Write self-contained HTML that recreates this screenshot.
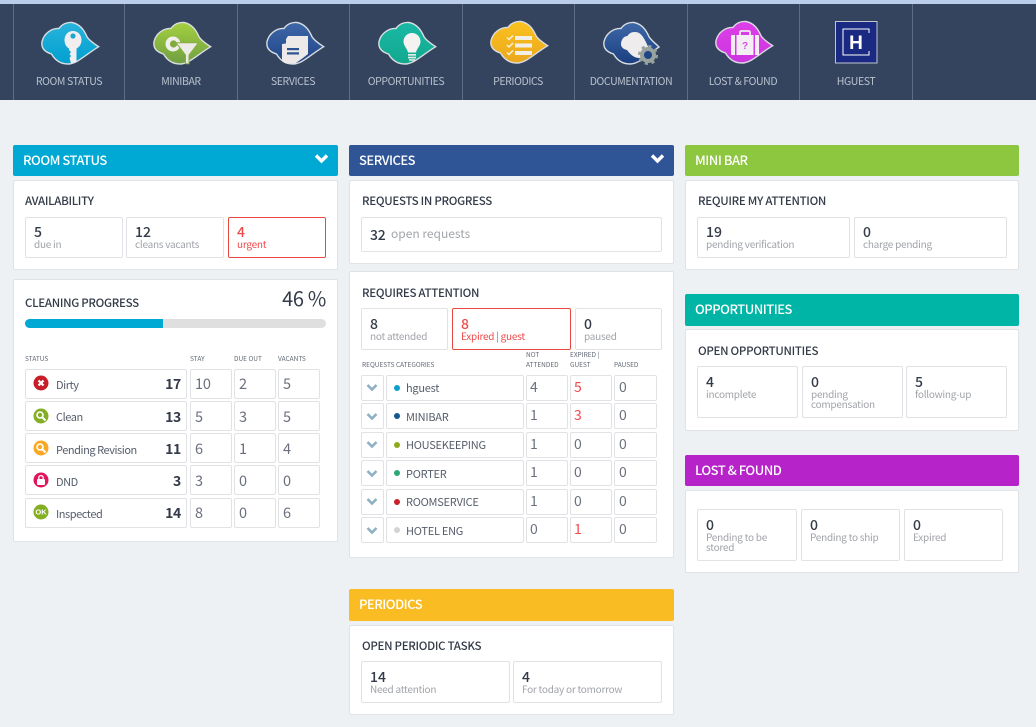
<!DOCTYPE html>
<html><head><meta charset="utf-8"><title>Dashboard</title>
<style>
*{box-sizing:border-box}
html,body{margin:0;padding:0;width:1036px;height:727px;overflow:hidden;background:#eef1f4}
body{position:relative;font-family:"Noto Sans CJK JP","Liberation Sans",sans-serif;color:#333b48}
.a,.b,.t,.hd,svg,.sep{position:absolute}
.t{white-space:nowrap;line-height:20px;height:20px}
.b{background:#fff;border:1px solid #e0e2e5;border-radius:2px}
.c{background:#fff;border:1px solid #e0e2e5;border-radius:2px;position:absolute}
.r{border-color:#e8483f}
.hd{border-radius:2px;color:#fff;font-size:13px;font-weight:500;letter-spacing:-.5px;line-height:30px;padding-left:10px}
.nl{color:#b9c1cd;font-size:10.5px;letter-spacing:-.4px;text-align:center;width:112px;top:72px}
.sep{top:4px;width:1px;height:96px;background:#5f6c83}
.ti{font-size:11.5px;font-weight:500;color:#333b48;letter-spacing:-.3px}
.n{font-size:14px;font-weight:500;color:#333b48}
.l{font-size:10px;letter-spacing:-.25px;color:#a0a3a9;margin-top:1px}
.th{font-size:6.5px;color:#5f6672}
.s{font-size:11px;letter-spacing:-.45px;color:#565d6b}
.s2{letter-spacing:-.25px}
.m{font-size:14.5px;letter-spacing:-.2px;color:#6a707d}
.bd{font-size:14px;font-weight:700;letter-spacing:-.3px;color:#333b48;text-align:right;width:30px}
.t.red{color:#ee4a4a}
</style></head><body>

<div class="a" style="left:0;top:0;width:1036px;height:4px;background:#bacdea"></div>
<div class="a" style="left:0;top:4px;width:1036px;height:96px;background:#34445f"></div>
<div class="sep" style="left:13px"></div><div class="sep" style="left:124px"></div><div class="sep" style="left:237px"></div><div class="sep" style="left:349px"></div><div class="sep" style="left:462px"></div><div class="sep" style="left:574px"></div><div class="sep" style="left:687px"></div><div class="sep" style="left:799px"></div><div class="sep" style="left:912px"></div>

<!-- room status icon -->
<svg style="left:41px;top:21px" width="60" height="46" viewBox="0 0 60 46"><defs><linearGradient id="g1" x1="0" y1="0" x2="0" y2="1"><stop offset="0" stop-color="#29b4dc"/><stop offset="1" stop-color="#009fcf"/></linearGradient></defs>
<path d="M57.7 25.7C52 22 48 19 46 15.7C43 9 39 3 31 1.5C26 1 21 3 18 7.5C11 7 3 12 1 20.7C0 27 4 31 10.5 33C14 39 19 43 27 43C36 43 44 34 57.7 25.7Z" fill="url(#g1)" stroke="#d9dde0" stroke-width="1.4"/>
<path d="M32 10C27 10 23.500 14 23.500 19C23.500 23 25.500 26 28 27.500L28 29L30 31L28.500 33L30 35L28.500 37L30 42.500L35.500 41L35.500 27.500C38.500 26 40.500 23 40.500 19C40.500 14 37 10 32 10Z" fill="#f0eeee"/><circle cx="32" cy="15" r="2.600" fill="#1aa9d3"/></svg>

<!-- minibar icon -->
<svg style="left:153px;top:21px" width="60" height="46" viewBox="0 0 60 46"><defs><linearGradient id="g2" x1="0" y1="0" x2="0" y2="1"><stop offset="0" stop-color="#a5d03f"/><stop offset="1" stop-color="#6f9f42"/></linearGradient></defs>
<path d="M57.700 25.700C52 22 48 19 46 15.700C43 9 39 3 31 1.500C26 1 21 3 18 7.500C11 7 3 12 1 20.700C0 27 4 31 10.500 33C14 39 19 43 27 43C36 43 44 34 57.700 25.700Z" fill="url(#g2)" stroke="#d9dde0" stroke-width="1.400"/>
<circle cx="20" cy="23" r="7.500" fill="#f0efec"/><circle cx="20.500" cy="23" r="3.600" fill="#82ac40"/>
<path d="M23 21.700H45.500L36 34V42.800H32.500V34Z" fill="#eeeae8" stroke="#84ae40" stroke-width="1"/></svg>

<!-- services icon -->
<svg style="left:266px;top:21px" width="60" height="46" viewBox="0 0 60 46"><defs><linearGradient id="g3" x1="0" y1="0" x2="0" y2="1"><stop offset="0" stop-color="#3f68a8"/><stop offset="1" stop-color="#1f4488"/></linearGradient></defs>
<path d="M57.700 25.700C52 22 48 19 46 15.700C43 9 39 3 31 1.500C26 1 21 3 18 7.500C11 7 3 12 1 20.700C0 27 4 31 10.500 33C14 39 19 43 27 43C36 43 44 34 57.700 25.700Z" fill="url(#g3)" stroke="#d9dde0" stroke-width="1.400"/>
<path d="M22 15H42V33C37 37 33 40 29 42.500H21C18 42 16.500 41 16 39V23L20 22.500V18Z" fill="#ece9e8"/><rect x="21" y="27" width="12" height="2.200" fill="#2d528f"/><rect x="21" y="31.300" width="12" height="2.200" fill="#2d528f"/></svg>

<!-- opportunities icon -->
<svg style="left:378px;top:21px" width="60" height="46" viewBox="0 0 60 46"><defs><linearGradient id="g4" x1="0" y1="0" x2="0" y2="1"><stop offset="0" stop-color="#19b9a5"/><stop offset="1" stop-color="#12a88e"/></linearGradient></defs>
<path d="M57.700 25.700C52 22 48 19 46 15.700C43 9 39 3 31 1.500C26 1 21 3 18 7.500C11 7 3 12 1 20.700C0 27 4 31 10.500 33C14 39 19 43 27 43C36 43 44 34 57.700 25.700Z" fill="url(#g4)" stroke="#d9dde0" stroke-width="1.400"/>
<path d="M34 12C29 12 25.500 16 25.500 20.500C25.500 25 29 27 30 31.500H38C39 27 42.500 25 42.500 20.500C42.500 16 39 12 34 12Z" fill="#f4f3f1"/><rect x="30" y="33" width="8" height="1.700" fill="#e8e8e6"/><rect x="30" y="35.700" width="8" height="1.700" fill="#e8e8e6"/><rect x="31" y="38.200" width="6" height="1.500" fill="#e8e8e6"/></svg>

<!-- periodics icon -->
<svg style="left:490px;top:20px" width="60" height="46" viewBox="0 0 60 46"><defs><linearGradient id="g5" x1="0" y1="0" x2="0" y2="1"><stop offset="0" stop-color="#fbc21f"/><stop offset="1" stop-color="#eaa81e"/></linearGradient></defs>
<path d="M57.700 25.700C52 22 48 19 46 15.700C43 9 39 3 31 1.500C26 1 21 3 18 7.500C11 7 3 12 1 20.700C0 27 4 31 10.500 33C14 39 19 43 27 43C36 43 44 34 57.700 25.700Z" fill="url(#g5)" stroke="#d9dde0" stroke-width="1.400"/>
<path d="M17 17.500L19 19.500L23 15.500M17 25L19 27L23 23M17 32.500L19 34.500L23 30.500" fill="none" stroke="#f5f1e6" stroke-width="1.500"/><rect x="25" y="16" width="17" height="4" fill="#f2efe9"/><rect x="25" y="23.500" width="17" height="4" fill="#f2efe9"/><rect x="25" y="31" width="17" height="4" fill="#f2efe9"/></svg>

<!-- documentation icon -->
<svg style="left:603px;top:21px" width="62" height="46" viewBox="0 0 62 46"><defs><linearGradient id="g6" x1="0" y1="0" x2="0" y2="1"><stop offset="0" stop-color="#3f68a8"/><stop offset="1" stop-color="#1a3f80"/></linearGradient></defs>
<path d="M56 26C52 22 48 19 46 15.700C43 9 39 3 31 1.500C26 1 21 3 18 7.500C11 7 3 12 1 20.700C0 27 4 31 10.500 33C14 39 19 43 27 43C36 43 44 34 56 26Z" fill="url(#g6)" stroke="#d9dde0" stroke-width="1.400"/>
<path d="M48 32C44 24 41 14 35 11.500C30 10 26 12 24.500 15C20 15 18 20 18 23C18 26 20 28 24 29C27 33 31 37 36 37C41 37 44 35 48 32Z" fill="#efeced"/>
<circle cx="45" cy="34" r="6" fill="#1f4488" stroke="#98a39d" stroke-width="4"/><circle cx="45" cy="34" r="8.800" fill="none" stroke="#98a39d" stroke-width="2.400" stroke-dasharray="3.200 3.710"/></svg>

<!-- lost found icon -->
<svg style="left:715px;top:20px" width="60" height="46" viewBox="0 0 60 46"><defs><linearGradient id="g7" x1="0" y1="0" x2="0" y2="1"><stop offset="0" stop-color="#dd3fe8"/><stop offset="1" stop-color="#cc35e0"/></linearGradient></defs>
<path d="M57.700 25.700C52 22 48 19 46 15.700C43 9 39 3 31 1.500C26 1 21 3 18 7.500C11 7 3 12 1 20.700C0 27 4 31 10.500 33C14 39 19 43 27 43C36 43 44 34 57.700 25.700Z" fill="url(#g7)" stroke="#d9dde0" stroke-width="1.400"/>
<path d="M25 15V12.500C25 11.500 25.500 11 26.500 11H33.500C34.500 11 35 11.500 35 12.500V15" fill="none" stroke="#f2e9f2" stroke-width="1.800"/><path d="M17 15H20V35H17C16.500 35 16 34.500 16 34V16C16 15.500 16.500 15 17 15ZM21.500 15H38.500V35H21.500ZM40 15H43C43.500 15 44 15.500 44 16V34C44 34.500 43.500 35 43 35H40Z" fill="#f3eef3"/><text x="30" y="29" font-family="Liberation Sans,sans-serif" font-size="10" font-weight="700" fill="#d94fe6" text-anchor="middle">?</text></svg>

<!-- hguest icon -->
<svg style="left:835px;top:21px" width="43" height="43" viewBox="0 0 43 43"><rect x=".5" y=".5" width="41.500" height="41.500" fill="#1a2a82" stroke="#c0c6d0"/><path d="M34 12V8H8V34H34V30" fill="none" stroke="#fff" stroke-width="1"/><text x="21" y="28" font-family="Liberation Sans,sans-serif" font-size="19" font-weight="700" fill="#fff" text-anchor="middle">H</text></svg>

<div class="t nl" style="left:13px">ROOM STATUS</div>
<div class="t nl" style="left:125px">MINIBAR</div>
<div class="t nl" style="left:237px">SERVICES</div>
<div class="t nl" style="left:350px">OPPORTUNITIES</div>
<div class="t nl" style="left:462px">PERIODICS</div>
<div class="t nl" style="left:575px">DOCUMENTATION</div>
<div class="t nl" style="left:687px">LOST &amp; FOUND</div>
<div class="t nl" style="left:800px">HGUEST</div>

<!-- COLUMN 1 -->
<div class="hd" style="left:13px;top:145px;width:325px;height:31px;background:#00a9d4">ROOM STATUS</div>
<svg style="left:314px;top:153px" width="15" height="11" viewBox="0 0 15 11"><path d="M2 2.500L7.500 8L13 2.500" fill="none" stroke="#fff" stroke-width="3.400"/></svg>
<div class="c" style="left:13px;top:180px;width:325px;height:90px"></div>
<div class="t ti" style="left:25px;top:191px">AVAILABILITY</div>
<div class="b" style="left:25px;top:217px;width:98px;height:41px"></div>
<div class="b" style="left:126px;top:217px;width:98px;height:41px"></div>
<div class="b r" style="left:228px;top:217px;width:98px;height:41px"></div>
<div class="t n" style="left:34px;top:222px">5</div><div class="t l" style="left:34px;top:233px">due in</div>
<div class="t n" style="left:135px;top:222px">12</div><div class="t l" style="left:135px;top:233px">cleans vacants</div>
<div class="t n red" style="left:237px;top:222px">4</div><div class="t l red" style="left:237px;top:233px">urgent</div>

<div class="c" style="left:13px;top:279px;width:325px;height:263px"></div>
<div class="t ti" style="left:25px;top:293px">CLEANING PROGRESS</div>
<div class="t" style="right:710px;top:288px;font-size:20px;letter-spacing:-.3px;color:#333b48">46 %</div>
<div class="a" style="left:25px;top:319px;width:301px;height:9px;border-radius:5px;background:#dfdfdf;overflow:hidden"><div style="width:138px;height:9px;background:#00a9d4"></div></div>
<div class="t th" style="left:25px;top:348px">STATUS</div><div class="t th" style="left:190px;top:348px">STAY</div><div class="t th" style="left:234px;top:348px">DUE OUT</div><div class="t th" style="left:278px;top:348px">VACANTS</div>

<div class="b" style="left:25px;top:369px;width:162px;height:30px"></div><div class="b" style="left:190px;top:369px;width:42px;height:30px"></div><div class="b" style="left:234px;top:369px;width:42px;height:30px"></div><div class="b" style="left:278px;top:369px;width:42px;height:30px"></div>
<div class="b" style="left:25px;top:401px;width:162px;height:30px"></div><div class="b" style="left:190px;top:401px;width:42px;height:30px"></div><div class="b" style="left:234px;top:401px;width:42px;height:30px"></div><div class="b" style="left:278px;top:401px;width:42px;height:30px"></div>
<div class="b" style="left:25px;top:433px;width:162px;height:30px"></div><div class="b" style="left:190px;top:433px;width:42px;height:30px"></div><div class="b" style="left:234px;top:433px;width:42px;height:30px"></div><div class="b" style="left:278px;top:433px;width:42px;height:30px"></div>
<div class="b" style="left:25px;top:465px;width:162px;height:30px"></div><div class="b" style="left:190px;top:465px;width:42px;height:30px"></div><div class="b" style="left:234px;top:465px;width:42px;height:30px"></div><div class="b" style="left:278px;top:465px;width:42px;height:30px"></div>
<div class="b" style="left:25px;top:498px;width:162px;height:30px"></div><div class="b" style="left:190px;top:498px;width:42px;height:30px"></div><div class="b" style="left:234px;top:498px;width:42px;height:30px"></div><div class="b" style="left:278px;top:498px;width:42px;height:30px"></div>

<svg style="left:33px;top:375px" width="16" height="16" viewBox="0 0 16 16"><circle cx="8" cy="8" r="7.500" fill="#c61f2a"/><path d="M5.500 5.500L10.500 10.500M10.500 5.500L5.500 10.500" stroke="#fff" stroke-width="2.200"/></svg>
<svg style="left:33px;top:408px" width="16" height="16" viewBox="0 0 16 16"><circle cx="8" cy="8" r="7.500" fill="#84ae24"/><circle cx="7" cy="7" r="3" fill="none" stroke="#fff" stroke-width="1.600"/><path d="M9.500 9.500L12.500 12.500" stroke="#fff" stroke-width="2"/></svg>
<svg style="left:33px;top:440px" width="16" height="16" viewBox="0 0 16 16"><circle cx="8" cy="8" r="7.500" fill="#f9a825"/><circle cx="7" cy="7" r="3" fill="none" stroke="#fff" stroke-width="1.600"/><path d="M9.500 9.500L12.500 12.500" stroke="#fff" stroke-width="2"/></svg>
<svg style="left:33px;top:472px" width="16" height="16" viewBox="0 0 16 16"><circle cx="8" cy="8" r="7.500" fill="#e2145c"/><rect x="4" y="7" width="8" height="6" rx="1" fill="#fff"/><path d="M5.800 7.500V5.500C5.800 3 10.200 3 10.200 5.500V7.500" fill="none" stroke="#fff" stroke-width="1.300"/></svg>
<svg style="left:33px;top:504px" width="16" height="16" viewBox="0 0 16 16"><circle cx="8" cy="8" r="7.500" fill="#84ae24"/><text x="8" y="10.500" font-family="Liberation Sans,sans-serif" font-size="7.500" font-weight="700" fill="#fff" text-anchor="middle">OK</text></svg>

<div class="t s" style="left:56px;top:375px">Dirty</div><div class="t bd" style="left:151px;top:374px">17</div><div class="t m" style="left:195px;top:374px">10</div><div class="t m" style="left:239px;top:374px">2</div><div class="t m" style="left:283px;top:374px">5</div>
<div class="t s" style="left:56px;top:407px">Clean</div><div class="t bd" style="left:151px;top:407px">13</div><div class="t m" style="left:195px;top:407px">5</div><div class="t m" style="left:239px;top:407px">3</div><div class="t m" style="left:283px;top:407px">5</div>
<div class="t s" style="left:56px;top:440px">Pending Revision</div><div class="t bd" style="left:151px;top:439px">11</div><div class="t m" style="left:195px;top:439px">6</div><div class="t m" style="left:239px;top:439px">1</div><div class="t m" style="left:283px;top:439px">4</div>
<div class="t s" style="left:56px;top:472px">DND</div><div class="t bd" style="left:151px;top:471px">3</div><div class="t m" style="left:195px;top:471px">3</div><div class="t m" style="left:239px;top:471px">0</div><div class="t m" style="left:283px;top:471px">0</div>
<div class="t s" style="left:56px;top:504px">Inspected</div><div class="t bd" style="left:151px;top:503px">14</div><div class="t m" style="left:195px;top:503px">8</div><div class="t m" style="left:239px;top:503px">0</div><div class="t m" style="left:283px;top:503px">6</div>

<!-- COLUMN 2 -->
<div class="hd" style="left:349px;top:145px;width:325px;height:31px;background:#2f5597">SERVICES</div>
<svg style="left:650px;top:153px" width="15" height="11" viewBox="0 0 15 11"><path d="M2 2.500L7.500 8L13 2.500" fill="none" stroke="#fff" stroke-width="3.400"/></svg>
<div class="c" style="left:349px;top:180px;width:325px;height:84px"></div>
<div class="t ti" style="left:362px;top:191px">REQUESTS IN PROGRESS</div>
<div class="b" style="left:361px;top:217px;width:301px;height:35px"></div>
<div class="t n" style="left:370px;top:225px;letter-spacing:-.2px">32</div>
<div class="t" style="left:391px;top:224px;font-size:12px;color:#a2a5aa">open requests</div>

<div class="c" style="left:349px;top:271px;width:325px;height:287px"></div>
<div class="t ti" style="left:362px;top:283px">REQUIRES ATTENTION</div>
<div class="b" style="left:361px;top:308px;width:87px;height:42px"></div>
<div class="b r" style="left:452px;top:308px;width:119px;height:42px"></div>
<div class="b" style="left:575px;top:308px;width:87px;height:42px"></div>
<div class="t n" style="left:370px;top:314px">8</div><div class="t l" style="left:370px;top:325px">not attended</div>
<div class="t n red" style="left:461px;top:314px">8</div><div class="t l red" style="left:461px;top:325px">Expired | guest</div>
<div class="t n" style="left:584px;top:314px">0</div><div class="t l" style="left:584px;top:325px">paused</div>
<div class="t th" style="left:362px;top:354px">REQUESTS CATEGORIES</div>
<div class="t th" style="left:526px;top:344px">NOT</div><div class="t th" style="left:526px;top:354px">ATTENDED</div>
<div class="t th" style="left:570px;top:344px">EXPIRED |</div><div class="t th" style="left:570px;top:354px">GUEST</div>
<div class="t th" style="left:614px;top:354px">PAUSED</div>

<div class="b" style="left:361px;top:375px;width:23px;height:26px"></div><div class="b" style="left:386px;top:375px;width:138px;height:26px"></div><div class="b" style="left:526px;top:375px;width:42px;height:26px"></div><div class="b" style="left:570px;top:375px;width:42px;height:26px"></div><div class="b" style="left:614px;top:375px;width:43px;height:26px"></div>
<div class="b" style="left:361px;top:403px;width:23px;height:26px"></div><div class="b" style="left:386px;top:403px;width:138px;height:26px"></div><div class="b" style="left:526px;top:403px;width:42px;height:26px"></div><div class="b" style="left:570px;top:403px;width:42px;height:26px"></div><div class="b" style="left:614px;top:403px;width:43px;height:26px"></div>
<div class="b" style="left:361px;top:432px;width:23px;height:26px"></div><div class="b" style="left:386px;top:432px;width:138px;height:26px"></div><div class="b" style="left:526px;top:432px;width:42px;height:26px"></div><div class="b" style="left:570px;top:432px;width:42px;height:26px"></div><div class="b" style="left:614px;top:432px;width:43px;height:26px"></div>
<div class="b" style="left:361px;top:460px;width:23px;height:26px"></div><div class="b" style="left:386px;top:460px;width:138px;height:26px"></div><div class="b" style="left:526px;top:460px;width:42px;height:26px"></div><div class="b" style="left:570px;top:460px;width:42px;height:26px"></div><div class="b" style="left:614px;top:460px;width:43px;height:26px"></div>
<div class="b" style="left:361px;top:489px;width:23px;height:26px"></div><div class="b" style="left:386px;top:489px;width:138px;height:26px"></div><div class="b" style="left:526px;top:489px;width:42px;height:26px"></div><div class="b" style="left:570px;top:489px;width:42px;height:26px"></div><div class="b" style="left:614px;top:489px;width:43px;height:26px"></div>
<div class="b" style="left:361px;top:517px;width:23px;height:26px"></div><div class="b" style="left:386px;top:517px;width:138px;height:26px"></div><div class="b" style="left:526px;top:517px;width:42px;height:26px"></div><div class="b" style="left:570px;top:517px;width:42px;height:26px"></div><div class="b" style="left:614px;top:517px;width:43px;height:26px"></div>

<svg style="left:366px;top:383px" width="12" height="9" viewBox="0 0 12 9"><path d="M1.500 2L6 6.500L10.500 2" fill="none" stroke="#8fb0c4" stroke-width="2.600"/></svg>
<svg style="left:366px;top:412px" width="12" height="9" viewBox="0 0 12 9"><path d="M1.500 2L6 6.500L10.500 2" fill="none" stroke="#8fb0c4" stroke-width="2.600"/></svg>
<svg style="left:366px;top:440px" width="12" height="9" viewBox="0 0 12 9"><path d="M1.500 2L6 6.500L10.500 2" fill="none" stroke="#8fb0c4" stroke-width="2.600"/></svg>
<svg style="left:366px;top:469px" width="12" height="9" viewBox="0 0 12 9"><path d="M1.500 2L6 6.500L10.500 2" fill="none" stroke="#8fb0c4" stroke-width="2.600"/></svg>
<svg style="left:366px;top:497px" width="12" height="9" viewBox="0 0 12 9"><path d="M1.500 2L6 6.500L10.500 2" fill="none" stroke="#8fb0c4" stroke-width="2.600"/></svg>
<svg style="left:366px;top:526px" width="12" height="9" viewBox="0 0 12 9"><path d="M1.500 2L6 6.500L10.500 2" fill="none" stroke="#8fb0c4" stroke-width="2.600"/></svg>

<div class="a" style="left:394px;top:385px;width:6px;height:6px;border-radius:50%;background:#0f9fcb"></div>
<div class="a" style="left:394px;top:413px;width:6px;height:6px;border-radius:50%;background:#14598f"></div>
<div class="a" style="left:394px;top:442px;width:6px;height:6px;border-radius:50%;background:#8cab1e"></div>
<div class="a" style="left:394px;top:470px;width:6px;height:6px;border-radius:50%;background:#2ba877"></div>
<div class="a" style="left:394px;top:499px;width:6px;height:6px;border-radius:50%;background:#c9202c"></div>
<div class="a" style="left:394px;top:527px;width:6px;height:6px;border-radius:50%;background:#d3d3d3"></div>

<div class="t s s2" style="left:406px;top:378px">hguest</div><div class="t m" style="left:530px;top:377px;font-size:14px">4</div><div class="t m red" style="left:574px;top:377px;font-size:14px">5</div><div class="t m" style="left:619px;top:377px;font-size:14px">0</div>
<div class="t s s2" style="left:406px;top:407px">MINIBAR</div><div class="t m" style="left:530px;top:405px;font-size:14px">1</div><div class="t m red" style="left:574px;top:405px;font-size:14px">3</div><div class="t m" style="left:619px;top:405px;font-size:14px">0</div>
<div class="t s s2" style="left:406px;top:435px">HOUSEKEEPING</div><div class="t m" style="left:530px;top:434px;font-size:14px">1</div><div class="t m" style="left:574px;top:434px;font-size:14px">0</div><div class="t m" style="left:619px;top:434px;font-size:14px">0</div>
<div class="t s s2" style="left:406px;top:464px">PORTER</div><div class="t m" style="left:530px;top:462px;font-size:14px">1</div><div class="t m" style="left:574px;top:462px;font-size:14px">0</div><div class="t m" style="left:619px;top:462px;font-size:14px">0</div>
<div class="t s s2" style="left:406px;top:492px">ROOMSERVICE</div><div class="t m" style="left:530px;top:491px;font-size:14px">1</div><div class="t m" style="left:574px;top:491px;font-size:14px">0</div><div class="t m" style="left:619px;top:491px;font-size:14px">0</div>
<div class="t s s2" style="left:406px;top:521px">HOTEL ENG</div><div class="t m" style="left:530px;top:519px;font-size:14px">0</div><div class="t m red" style="left:574px;top:519px;font-size:14px">1</div><div class="t m" style="left:619px;top:519px;font-size:14px">0</div>

<div class="hd" style="left:349px;top:589px;width:325px;height:32px;background:#f9bc22">PERIODICS</div>
<div class="c" style="left:349px;top:625px;width:325px;height:90px"></div>
<div class="t ti" style="left:362px;top:636px">OPEN PERIODIC TASKS</div>
<div class="b" style="left:361px;top:661px;width:149px;height:42px"></div>
<div class="b" style="left:513px;top:661px;width:149px;height:42px"></div>
<div class="t n" style="left:370px;top:667px">14</div><div class="t l" style="left:370px;top:678px">Need attention</div>
<div class="t n" style="left:522px;top:667px">4</div><div class="t l" style="left:522px;top:678px">For today or tomorrow</div>

<!-- COLUMN 3 -->
<div class="hd" style="left:685px;top:145px;width:334px;height:31px;background:#8dc63f">MINI BAR</div>
<div class="c" style="left:685px;top:180px;width:334px;height:90px"></div>
<div class="t ti" style="left:698px;top:191px">REQUIRE MY ATTENTION</div>
<div class="b" style="left:697px;top:217px;width:153px;height:41px"></div>
<div class="b" style="left:854px;top:217px;width:153px;height:41px"></div>
<div class="t n" style="left:706px;top:222px">19</div><div class="t l" style="left:706px;top:233px">pending verification</div>
<div class="t n" style="left:863px;top:222px">0</div><div class="t l" style="left:863px;top:233px">charge pending</div>

<div class="hd" style="left:685px;top:294px;width:334px;height:32px;background:#00b5a5">OPPORTUNITIES</div>
<div class="c" style="left:685px;top:329px;width:334px;height:102px"></div>
<div class="t ti" style="left:698px;top:341px">OPEN OPPORTUNITIES</div>
<div class="b" style="left:697px;top:366px;width:101px;height:52px"></div>
<div class="b" style="left:802px;top:366px;width:101px;height:52px"></div>
<div class="b" style="left:906px;top:366px;width:101px;height:52px"></div>
<div class="t n" style="left:706px;top:372px">4</div><div class="t l" style="left:706px;top:383px">incomplete</div>
<div class="t n" style="left:811px;top:372px">0</div><div class="t l" style="left:811px;top:383px">pending</div><div class="t l" style="left:811px;top:393px">compensation</div>
<div class="t n" style="left:915px;top:372px">5</div><div class="t l" style="left:915px;top:383px">following-up</div>

<div class="hd" style="left:685px;top:455px;width:334px;height:31px;background:#b523c9">LOST &amp; FOUND</div>
<div class="c" style="left:685px;top:490px;width:334px;height:83px"></div>
<div class="b" style="left:697px;top:509px;width:100px;height:52px"></div>
<div class="b" style="left:801px;top:509px;width:99px;height:52px"></div>
<div class="b" style="left:904px;top:509px;width:99px;height:52px"></div>
<div class="t n" style="left:706px;top:515px">0</div><div class="t l" style="left:706px;top:526px">Pending to be</div><div class="t l" style="left:706px;top:536px">stored</div>
<div class="t n" style="left:810px;top:515px">0</div><div class="t l" style="left:810px;top:526px">Pending to ship</div>
<div class="t n" style="left:913px;top:515px">0</div><div class="t l" style="left:913px;top:526px">Expired</div>
</body></html>
